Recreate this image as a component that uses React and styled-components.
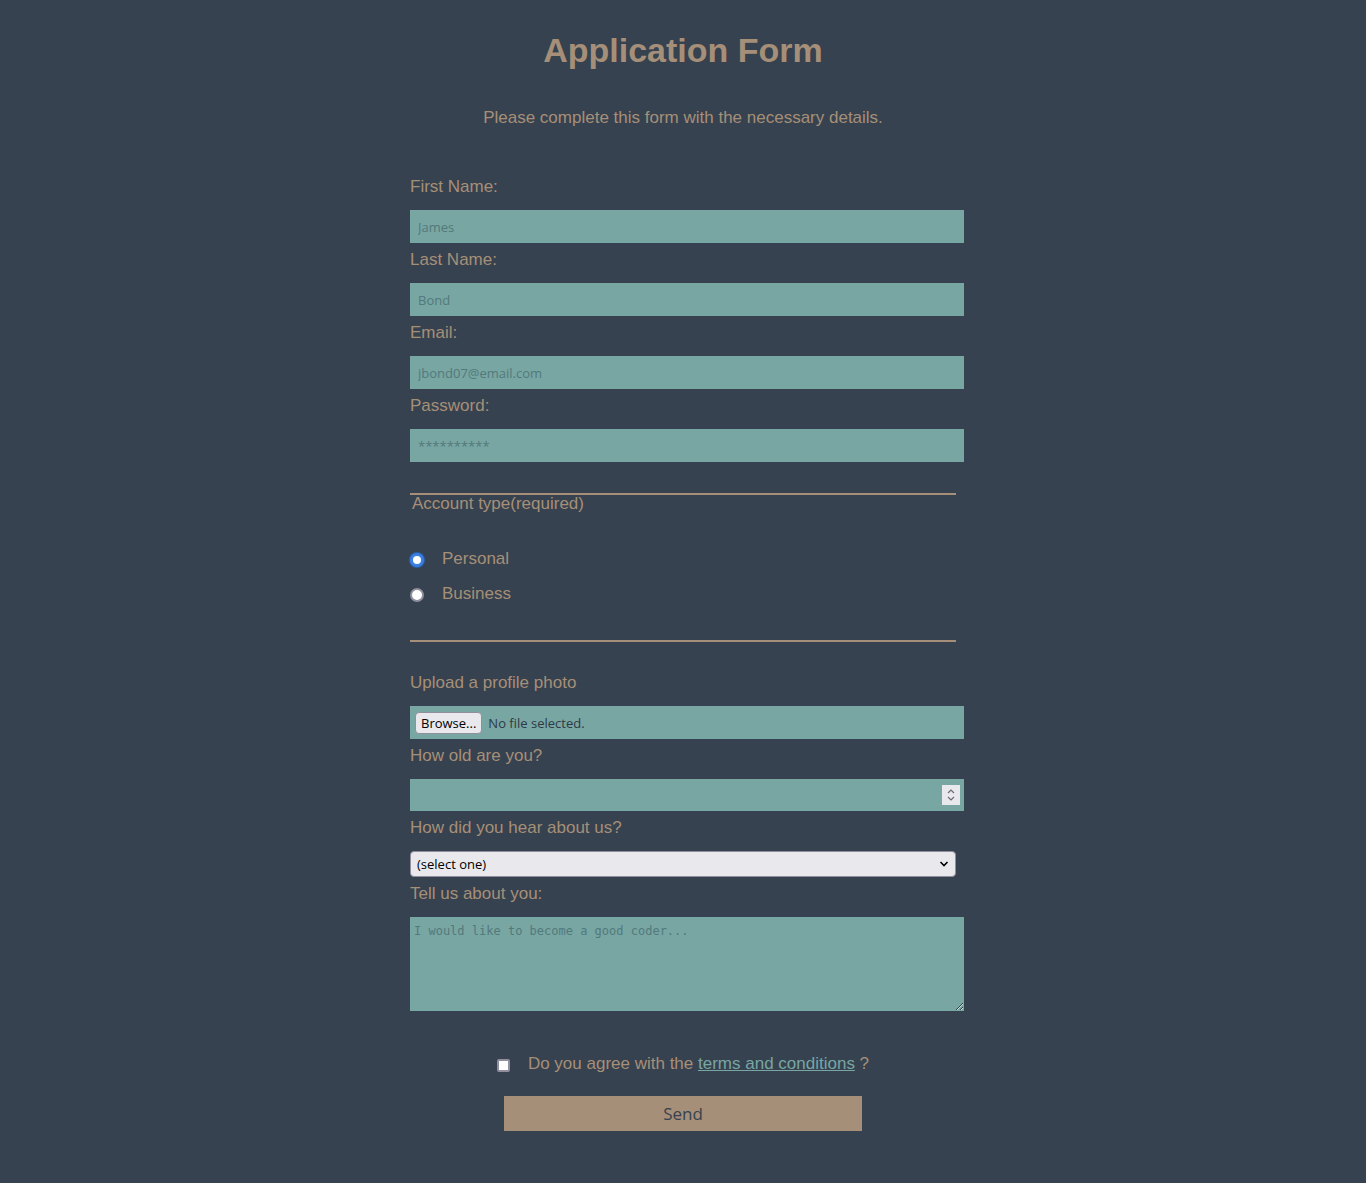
import React from 'react';
import styled, { createGlobalStyle } from 'styled-components';

const GlobalStyle = createGlobalStyle`
	body {
		margin: 0;
		background: #36424f;
		font-family: "Liberation Sans", Arial, sans-serif;
		font-size: 17px;
		color: #a68f78;
	}
`;

const Page = styled.main`
	padding: 31px 0 52px;
`;

const Title = styled.h1`
	margin: 0;
	font-size: 34px;
	line-height: 39px;
	text-align: center;
	font-weight: bold;
`;

const Subtitle = styled.p`
	margin: 38px 0 0;
	line-height: 20px;
	text-align: center;
`;

const Form = styled.form`
	width: 546px;
	margin: 42px auto 0;
`;

const Label = styled.label`
	display: block;
	padding-top: 5px;
	line-height: 24px;
	margin-bottom: 11px;
`;

const Input = styled.input`
	display: block;
	box-sizing: border-box;
	width: calc(100% + 8px);
	height: ${p => p.$h || 33}px;
	padding: 0 8px;
	border: none;
	outline: none;
	background: #78a6a3;
	font-family: "Open Sans", sans-serif;
	font-size: 13px;
	color: #2e3a44;
	appearance: textfield;
	&::placeholder {
		color: #53797b;
	}
	&::-webkit-inner-spin-button,
	&::-webkit-outer-spin-button {
		-webkit-appearance: none;
		margin: 0;
	}
`;

const Fieldset = styled.div`
	margin-top: 31px;
	border-top: 2px solid #a68f78;
	border-bottom: 2px solid #a68f78;
`;

const Legend = styled.div`
	margin-left: 2px;
	line-height: 17px;
`;

const RadioGroup = styled.div`
	padding: 29px 0 29px;
`;

const RadioRow = styled.label`
	display: flex;
	align-items: center;
	gap: 18px;
	height: 35px;
`;

const Radio = styled.input`
	appearance: none;
	margin: 2px 0 0;
	width: 14px;
	height: 14px;
	border-radius: 50%;
	box-sizing: border-box;
	border: 2px solid #8f8f9d;
	background: #fff;
	&:checked {
		border: 3px solid #3b7fe0;
		box-shadow: 0 0 0 1px #2a5fae;
	}
`;

const FileBox = styled.label`
	display: flex;
	align-items: center;
	gap: 6px;
	box-sizing: border-box;
	width: calc(100% + 8px);
	height: 33px;
	padding: 0 5px;
	background: #78a6a3;
	font-family: "Open Sans", sans-serif;
	font-size: 13px;
	color: #2e3a44;
	input {
		display: none;
	}
`;

const NativeButton = styled.span`
	box-sizing: border-box;
	height: 22px;
	padding: 0 5px;
	display: flex;
	align-items: center;
	background: #e9e9ed;
	border: 1px solid #8f8f9d;
	border-radius: 4px;
	color: #000;
`;

const Spot = styled.div`
	position: relative;
`;

const Spinner = styled.span`
	position: absolute;
	top: 6px;
	right: -4px;
	width: 18px;
	height: 20px;
	background: #e9e9ed;
	display: flex;
	align-items: center;
	justify-content: center;
	pointer-events: none;
`;

const Select = styled.select`
	display: block;
	appearance: none;
	box-sizing: border-box;
	width: 100%;
	height: 26px;
	padding: 0 6px;
	background: #e9e9ed;
	border: 1px solid #8f8f9d;
	border-radius: 4px;
	font-family: "Open Sans", sans-serif;
	font-size: 13px;
	color: #000;
`;

const Chevron = styled.svg`
	position: absolute;
	right: 7px;
	top: 9px;
	pointer-events: none;
`;

const TextArea = styled.textarea`
	display: block;
	box-sizing: border-box;
	width: calc(100% + 8px);
	height: 94px;
	padding: 7px 4px;
	border: none;
	outline: none;
	background: #78a6a3;
	font-family: "DejaVu Sans Mono", monospace;
	font-size: 12px;
	&::placeholder {
		color: #53797b;
	}
`;

const AgreeRow = styled.label`
	display: flex;
	justify-content: center;
	align-items: center;
	gap: 18px;
	margin-top: 41px;
	line-height: 24px;
	a {
		color: #78a6a3;
	}
`;

const Checkbox = styled.input`
	appearance: none;
	margin: 2px 0 0;
	width: 13px;
	height: 13px;
	box-sizing: border-box;
	border: 2px solid #8f8f9d;
	border-radius: 2px;
	background: #fff;
`;

const SendButton = styled.button`
	display: block;
	width: 358px;
	height: 35px;
	margin: 20px auto 0;
	border: none;
	background: #a68f78;
	color: #36424f;
	font-family: "Open Sans", sans-serif;
	font-size: 17px;
`;

const fields = [
	{ id: 'first', label: 'First Name:', ph: 'James' },
	{ id: 'last', label: 'Last Name:', ph: 'Bond' },
	{ id: 'email', label: 'Email:', ph: 'jbond07@email.com' },
	{ id: 'pass', label: 'Password:', ph: '**********' },
];

const App = () => {
	return (
		<Page>
			<GlobalStyle />
			<Title>Application Form</Title>
			<Subtitle>Please complete this form with the necessary details.</Subtitle>
			<Form onSubmit={e => e.preventDefault()}>
				{fields.map(f => (
					<div key={f.id}>
						<Label htmlFor={f.id}>{f.label}</Label>
						<Input id={f.id} type="text" placeholder={f.ph} />
					</div>
				))}

				<Fieldset>
					<Legend>Account type(required)</Legend>
					<RadioGroup>
						<RadioRow>
							<Radio type="radio" name="acc" defaultChecked />
							Personal
						</RadioRow>
						<RadioRow>
							<Radio type="radio" name="acc" />
							Business
						</RadioRow>
					</RadioGroup>
				</Fieldset>

				<Label style={{ marginTop: 24 }}>Upload a profile photo</Label>
				<FileBox>
					<input type="file" />
					<NativeButton>Browse...</NativeButton>
					No file selected.
				</FileBox>

				<Label htmlFor="age">How old are you?</Label>
				<Spot>
					<Input id="age" type="number" $h={32} />
					<Spinner>
						<svg width="10" height="14" viewBox="0 0 10 14" fill="none" stroke="#6b6b75" strokeWidth="1.2">
							<path d="M2 5 L5 2 L8 5" />
							<path d="M2 9 L5 12 L8 9" />
						</svg>
					</Spinner>
				</Spot>

				<Label htmlFor="hear">How did you hear about us?</Label>
				<Spot>
					<Select id="hear" defaultValue="">
						<option value="">(select one)</option>
						<option>Friends</option>
						<option>Internet</option>
						<option>Other</option>
					</Select>
					<Chevron width="10" height="8" viewBox="0 0 10 8" fill="none" stroke="#000" strokeWidth="1.6">
						<path d="M1.5 2 L5 5.5 L8.5 2" />
					</Chevron>
				</Spot>

				<Label htmlFor="about">Tell us about you:</Label>
				<TextArea id="about" placeholder="I would like to become a good coder..." />

				<AgreeRow>
					<Checkbox type="checkbox" />
					<span>Do you agree with the <a href="#terms">terms and conditions</a> ?</span>
				</AgreeRow>
				<SendButton type="submit">Send</SendButton>
			</Form>
		</Page>
	);
};

export default App;
